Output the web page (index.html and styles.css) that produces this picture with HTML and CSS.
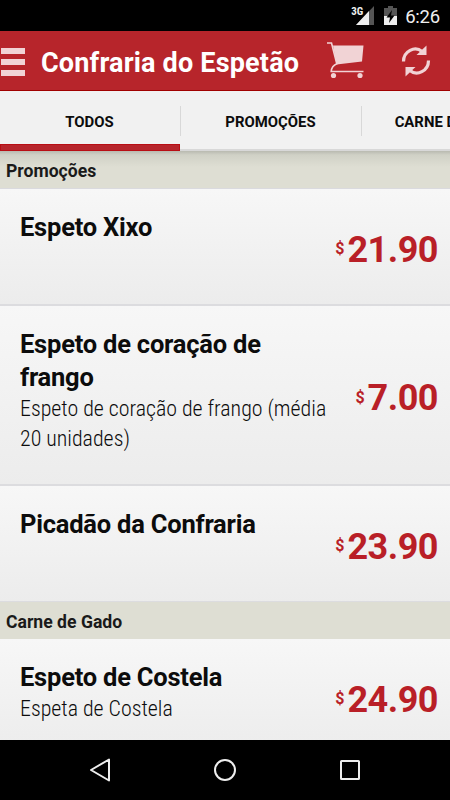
FILE: index.html
```html
<!DOCTYPE html>
<html lang="pt-br">
<head>
  <meta charset="UTF-8" />
  <meta name="viewport" content="width=device-width, initial-scale=1.0" />
  <title>Confraria do Espetão</title>
  <link rel="stylesheet" href="styles.css">
</head>
<body>
  <div class="status-bar">
    <span class="network">3G</span>
    <svg class="signal" width="18" height="19" viewBox="0 0 18 19">
      <path d="M18 0V19H0z" fill="#555" />
      <path d="M13 5V19H0z" fill="#eee" />
    </svg>
    <svg class="battery" width="13" height="19" viewBox="0 0 13 19">
      <path d="M4 0h5v2h4v8H0V2h4z" fill="#555" />
      <path d="M0 10h13v9H0z" fill="#eee" />
      <path d="M8 4L2.500 11.500H6L5 17l5.500-7.500H7z" fill="#000" />
    </svg>
    <span class="clock">6:26</span>
  </div>

  <header class="header">
    <div class="menu"><i></i><i></i><i></i></div>
    <h1>Confraria do Espetão</h1>
    <svg class="cart" width="38" height="37" viewBox="0 0 38 37">
      <path d="M6 3.500H36.500l-1.500 16L9.500 22.500z" fill="#f1d3d5" />
      <path d="M0 1H4.500L9.800 21.800C6 23.500 4.500 25.500 4.200 29.500H36.500" fill="none" stroke="#f1d3d5" stroke-width="1.600" />
      <circle cx="6.500" cy="33.500" r="2.600" fill="#f1d3d5" />
      <circle cx="33" cy="33.500" r="2.600" fill="#f1d3d5" />
    </svg>
    <svg class="refresh" width="30" height="32" viewBox="0 0 30 32">
      <g fill="none" stroke="#f1d3d5" stroke-width="3.200">
        <path d="M2.500 16.500C2.500 6 14 .5 21 6.500" />
        <path d="M27.500 15.500C27.500 26 16 31.500 9 25.500" />
      </g>
      <path d="M25.500.5v9.500H15.500z" fill="#f1d3d5" />
      <path d="M4.500 31.500V22h10z" fill="#f1d3d5" />
    </svg>
  </header>

  <nav class="tabs">
    <a class="tab active">TODOS</a>
    <a class="tab">PROMOÇÕES</a>
    <a class="tab">CARNE DE GADO</a>
  </nav>

  <main class="menu-list">
    <h2 class="section first">Promoções</h2>
    <div class="item">
      <div class="info">
        <h3>Espeto Xixo</h3>
      </div>
      <div class="price"><small>$</small><b>21.90</b></div>
    </div>
    <div class="item tall">
      <div class="info">
        <h3>Espeto de coração de<br>frango</h3>
        <p>Espeto de coração de frango (média<br>20 unidades)</p>
      </div>
      <div class="price"><small>$</small><b>7.00</b></div>
    </div>
    <div class="item last">
      <div class="info">
        <h3>Picadão da Confraria</h3>
      </div>
      <div class="price"><small>$</small><b>23.90</b></div>
    </div>

    <h2 class="section">Carne de Gado</h2>
    <div class="item">
      <div class="info">
        <h3>Espeto de Costela</h3>
        <p>Espeta de Costela</p>
      </div>
      <div class="price"><small>$</small><b>24.90</b></div>
    </div>
  </main>

  <footer class="nav-bar">
    <svg width="24" height="26" viewBox="0 0 24 26">
      <path d="M3 13L21 2.500v21z" />
    </svg>
    <svg width="24" height="26" viewBox="0 0 24 26">
      <circle cx="12" cy="13" r="10" />
    </svg>
    <svg width="24" height="26" viewBox="0 0 24 26">
      <rect x="3" y="4" width="18" height="18" rx=".5" />
    </svg>
  </footer>
</body>
</html>
```

FILE: styles.css
```css
* {
  box-sizing: border-box;
}

body {
  margin: 0;
  width: 450px;
  height: 800px;
  overflow: hidden;
  display: flex;
  flex-direction: column;
  font-family: Roboto, sans-serif;
  background: #000;
  color: #0c0c0c;
}

h1, h2, h3, p {
  margin: 0;
}

.status-bar {
  height: 31px;
  flex: none;
  display: flex;
  align-items: flex-start;
  padding: 6px 10px 0 0;
  justify-content: flex-end;
  color: #eee;
}

.network {
  font-size: 11px;
  font-weight: bold;
  font-stretch: 75%;
  line-height: 11px;
  margin-right: -7px;
}

.battery {
  margin: 0 8px 0 10px;
}

.clock {
  font-size: 18.5px;
  line-height: 22px;
  letter-spacing: -0.2px;
}

.header {
  height: 60px;
  flex: none;
  display: flex;
  align-items: center;
  background: #b7252b;
  border-bottom: 1px solid #a00000;
}

.menu {
  width: 24px;
  height: 28px;
  display: flex;
  flex-direction: column;
  justify-content: space-between;
  margin: 2px 16px 0 1px;
}

.menu i {
  height: 6px;
  background: #f1d3d5;
}

h1 {
  width: 286px;
  font-size: 27px;
  line-height: 32px;
  letter-spacing: 0.18px;
  color: #fff;
  white-space: nowrap;
  margin-top: 4px;
}

.refresh {
  margin-left: 36px;
}

.tabs {
  height: 60px;
  flex: none;
  display: flex;
  overflow-x: clip;
  background: #f1f1f1;
  border-bottom: 2px solid #d8d8d8;
}

.tab {
  width: 181px;
  height: 60px;
  flex: none;
  padding-right: 2px;
  font-size: 14.9px;
  font-weight: bold;
  line-height: 62px;
  text-align: center;
  background: linear-gradient(#d8d8d8, #d8d8d8) 100% 15px / 1px 30px no-repeat;
}

.tab.active {
  position: relative;
}

/* selected tab indicator */
.tab.active::after {
  content: "";
  position: absolute;
  left: 0;
  right: 1px;
  bottom: 0;
  height: 5px;
  background: #b7252b;
  border: 1px solid #b80e14;
}

.menu-list {
  flex: 1;
  min-height: 0;
  overflow: hidden;
}

.section {
  height: 37px;
  padding-left: 6px;
  font-size: 17.6px;
  line-height: 40px;
  color: #1a1a1a;
  background: #deded3;
}

.section.first {
  height: 38px;
  background: linear-gradient(#b9bab0, #d0d1c6 4px, #deded3 16px);
  border-bottom: 1px solid #dadade;
}

.item {
  height: 117px;
  display: flex;
  justify-content: space-between;
  align-items: center;
  padding: 0 12px 0 20px;
  background: linear-gradient(#f7f7f7, #ececec);
  border-bottom: 2px solid #dcdcdf;
}

.item.tall {
  height: 180px;
}

.item.last {
  height: 116px;
  border-bottom-width: 1px;
}

.info {
  align-self: flex-start;
  padding-top: 22px;
  white-space: nowrap;
}

h3 {
  font-size: 25.5px;
  line-height: 33px;
  letter-spacing: -0.22px;
}

p {
  font-size: 21.9px;
  line-height: 30px;
  font-weight: 300;
  font-stretch: 75%;
}

.price {
  display: flex;
  align-items: center;
  padding-top: 6px;
  color: #b91f27;
}

.price small {
  font-size: 16px;
  font-weight: bold;
  margin: 0 3px 2px 0;
}

.price b {
  font-size: 36px;
  line-height: 44px;
  letter-spacing: -0.5px;
}

.nav-bar {
  height: 60px;
  flex: none;
  display: flex;
  align-items: center;
  justify-content: space-between;
  padding: 0 88px;
}

.nav-bar svg {
  fill: none;
  stroke: #eee;
  stroke-width: 2;
  stroke-linejoin: round;
}
```
